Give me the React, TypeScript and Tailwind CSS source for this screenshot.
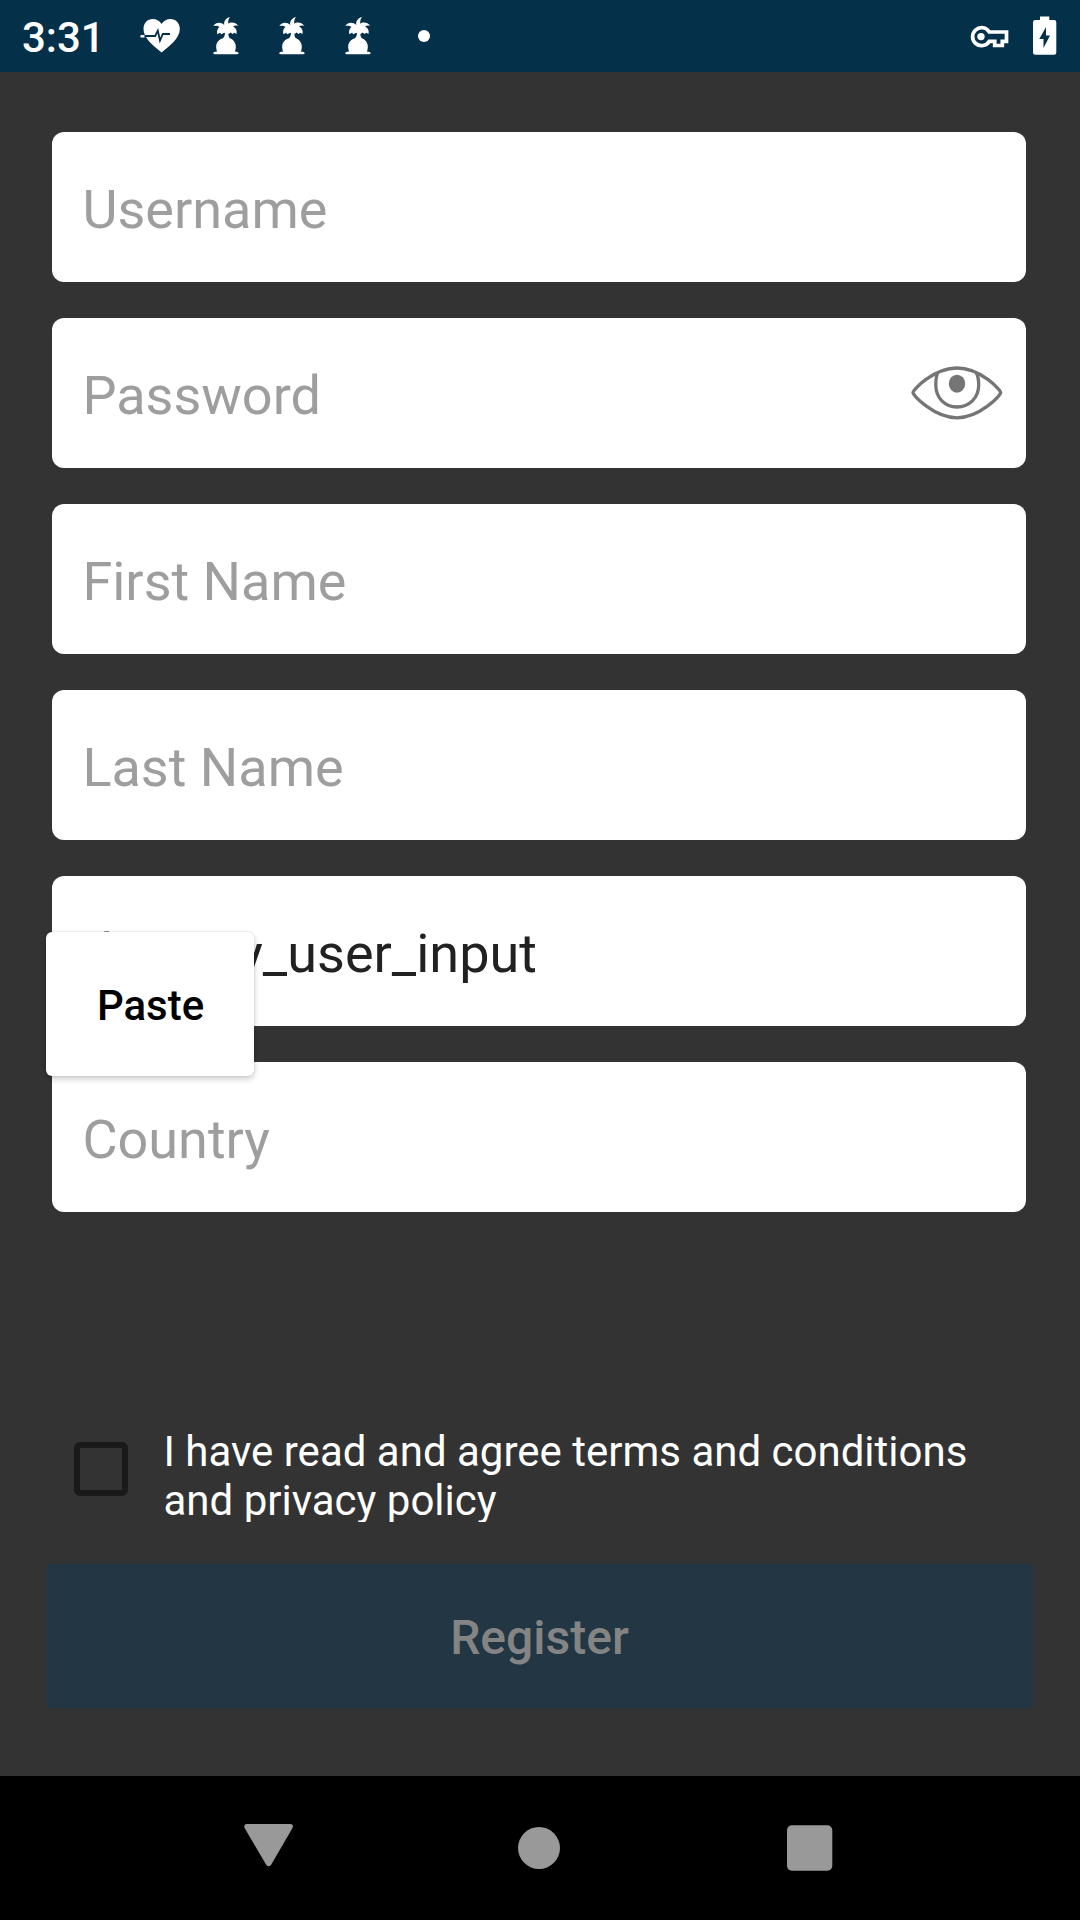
function HeartPulse() {
  return (
    <svg width="40" height="34" viewBox="0 0 40 34" className="shrink-0">
      <path
        d="M21.600 33.600 C14 27 3.500 19.500 3.500 10 C3.500 4 7.500 0 12.700 0 C16.500 0 20 2 21.600 5 C23.200 2 26.700 0 30.500 0 C35.700 0 39.800 4 39.800 10 C39.800 19.500 29.200 27 21.600 33.600 Z"
        fill="#fff"
      />
      <path d="M3 17 H15.200 L17.800 11.700 L20 21.500 L22.800 15 H30" fill="none" stroke="#05304a" strokeWidth="1.800" />
      <path d="M0.500 17.300 H4.500" stroke="#fff" strokeWidth="2.400" />
    </svg>
  );
}

function PalmIsland() {
  return (
    <svg width="26" height="38" viewBox="0 0 26 38" fill="#fff" className="shrink-0">
      <path d="M11.300 8 C10.500 5 12.500 1.200 17 0 C15.500 2 15 4 15.300 6.800 C17.500 4.800 22.500 4.800 25.500 9 C23.500 8.300 21.500 8.500 20 9.500 C23 11 24.300 13.500 23.500 17 L21.300 15.800 L19.500 17 L17.800 15.500 L15.500 17 L14.800 16 L13 17 L11.200 15.800 L8.300 17.300 L7 15.800 L4.300 17.200 C3.500 14 4.500 11.500 6.500 10 C5 8.700 2.500 8.300 0.300 9 C3 4.800 8 4.800 11.300 8 Z" />
      <path d="M12 14 H15.300 C15 17 15.600 20 16.800 21.200 C20.500 22.500 22.800 25.800 22.800 29.500 C22.800 31.500 22.500 33.300 21.800 34.600 C24 34.700 25.500 35.300 25.700 36.300 C25.500 37 24.500 37.300 23 37.300 H3 C1.300 37.300 0.300 37 0.200 36.300 C0.300 35.300 2 34.700 4.200 34.600 C3.500 33 3.200 31.500 3.200 29.500 C3.200 25.800 5.500 22.500 10 21.200 C11.800 19.500 12.200 17 12 14 Z" />
    </svg>
  );
}

function VpnKey() {
  return (
    <svg width="40" height="24" viewBox="0 0 40 24" className="shrink-0">
      <path
        d="M19.300 7 H36.500 V16.300 H32.300 V20.500 H24.700 V16.300 H19.300 A9 9 0 1 1 19.300 7 Z"
        fill="none"
        stroke="#fff"
        strokeWidth="3.700"
      />
      <circle cx="11" cy="11.600" r="3.700" fill="#fff" />
    </svg>
  );
}

function BatteryCharging() {
  return (
    <svg width="24" height="40" viewBox="0 0 24 40" className="shrink-0">
      <path
        d="M7 0.500 H16.300 V4 H21 Q23.300 4 23.300 6.300 V36.500 Q23.300 38.800 21 38.800 H2.300 Q0 38.800 0 36.500 V6.300 Q0 4 2.300 4 H7 Z"
        fill="#fff"
      />
      <path d="M13 11 V19.600 H17 L10.500 32 V23 H6.300 Z" fill="#05304a" />
    </svg>
  );
}

function Eye() {
  return (
    <svg width="92" height="54" viewBox="0 0 92 54" fill="none" stroke="#757575" strokeWidth="3.300" className="shrink-0">
      <path d="M2 26.600 C1 25 22 2 46 2 C70 2 90.500 25 89.700 26.600 C90.500 28.500 69 51.800 46 51.800 C23 51.800 1 28.500 2 26.600 Z" />
      <path d="M26.800 6.500 C25 10 24.800 13 24.800 19 C24.800 32 34 41 46 41 C58 41 67.700 32 67.700 19 C67.700 13 67 10 65.200 6.500" />
      <ellipse cx="46" cy="17.700" rx="8.200" ry="9" fill="#757575" stroke="none" />
    </svg>
  );
}

const fields = [
  { label: "Username" },
  { label: "Password", eye: true },
  { label: "First Name" },
  { label: "Last Name" },
  { label: "dummy_user_input", filled: true },
  { label: "Country" },
];

export default function App() {
  return (
    <div className="relative flex h-[1920px] w-[1080px] flex-col overflow-hidden bg-[#333333] font-['Roboto',sans-serif]">
      <header className="flex h-[72px] items-center bg-[#05304a] pr-[23px] pl-[22px]">
        <span className="w-[118px] pt-[4px] text-[42px] leading-none font-medium text-white">3:31</span>
        <HeartPulse />
        <div className="ml-[33px] flex gap-10">
          <PalmIsland />
          <PalmIsland />
          <PalmIsland />
        </div>
        <span className="ml-[47px] size-3 rounded-full bg-white" />
        <div className="ml-auto flex items-center gap-[23px]">
          <div className="pt-[2px]">
            <VpnKey />
          </div>
          <BatteryCharging />
        </div>
      </header>

      <main className="flex h-[1704px] flex-col">
        <div className="mt-[60px] ml-[52.4px] flex w-[973.6px] flex-col gap-9">
          {fields.map((f) => (
            <div
              key={f.label}
              className="flex h-[150px] items-center justify-between rounded-xl bg-white pr-[23px] pl-[30px]"
            >
              <span
                className={
                  f.filled
                    ? "pt-[5px] text-[54px] leading-[64px] text-[#212121]"
                    : "pt-[5px] text-[54px] leading-[64px] text-[#9e9e9e]"
                }
              >
                {f.label}
              </span>
              {f.eye && <Eye />}
            </div>
          ))}
        </div>

        <div className="mt-[214px] ml-[73.5px] flex h-[96px] items-start">
          <span className="mt-4 size-[54px] shrink-0 rounded-md border-6 border-[#1a1a1a]" />
          <p className="ml-[36px] h-24 overflow-hidden pt-px text-[42px] leading-[49px] whitespace-nowrap text-white">
            I have read and agree terms and conditions
            <br />
            and privacy policy
          </p>
        </div>

        <button className="mt-[42px] ml-[46.5px] flex h-[144px] w-[986px] items-center justify-center rounded-[2px] bg-[#223743] pt-[3px] text-[48px] font-medium text-[#848484]">
          Register
        </button>
      </main>

      <nav className="flex h-36 items-start bg-black pt-12 pl-[244px]">
        <svg width="50" height="43" viewBox="0 0 50 43" className="shrink-0">
          <path
            d="M3 0 H46 Q50 0 48.500 4 L27 41 Q24.600 43.500 22.300 41 L0.600 4 Q-0.500 0 3 0 Z"
            fill="#999999"
          />
        </svg>
        <span className="mt-[3px] ml-[224px] size-[42px] rounded-full bg-[#999999]" />
        <svg width="46" height="46" viewBox="0 0 46 46" className="mt-[1px] ml-[227px] shrink-0">
          <rect x="0" y="0.300" width="45.300" height="45.400" rx="5" fill="#999999" />
        </svg>
      </nav>

      <div className="absolute top-[932px] left-[46.3px] flex h-36 w-[207.5px] items-center justify-center rounded-md bg-white pt-[3px] pl-px text-[42px] font-medium text-black shadow-[0_3px_6px_rgba(0,0,0,0.2),0_0_2px_rgba(0,0,0,0.15)]">
        Paste
      </div>
    </div>
  );
}
